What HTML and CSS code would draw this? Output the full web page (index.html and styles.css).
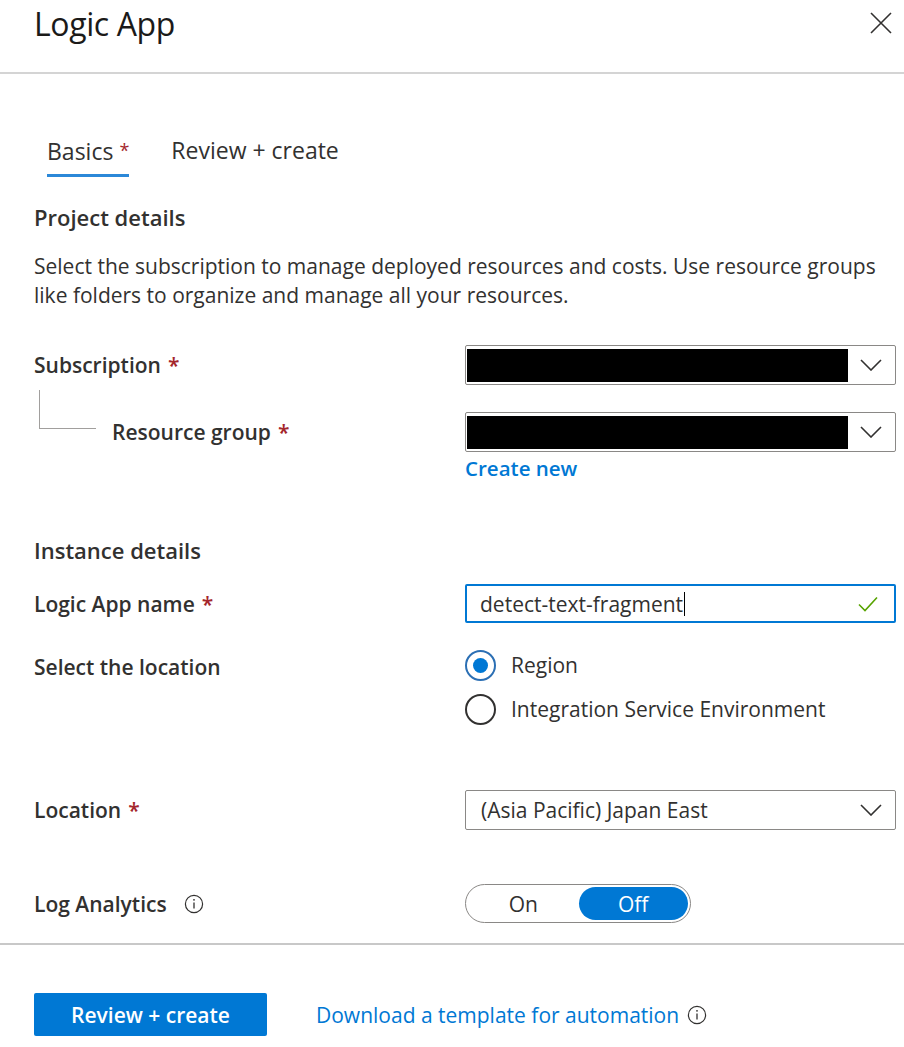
FILE: index.html
```html
<!DOCTYPE html>
<html lang="en">
<head>
<meta charset="utf-8">
<title>Logic App</title>
<link rel="stylesheet" href="styles.css">
</head>
<body>
<div class="panel">
  <header class="panel-header">
    <h1 class="panel-title">Logic App</h1>
    <button class="close-btn" aria-label="Close">
      <svg width="22" height="22" viewBox="0 0 22 22"><path d="M1 1 L21 21 M21 1 L1 21" stroke="#323130" stroke-width="1.6" fill="none"/></svg>
    </button>
  </header>

  <main class="panel-body">
    <nav class="tabs">
      <span class="tab tab-active">Basics<span class="req">*</span></span>
      <span class="tab">Review + create</span>
    </nav>

    <h2 class="section-title first">Project details</h2>
    <p class="desc">Select the subscription to manage deployed resources and costs. Use resource groups like folders to organize and manage all your resources.</p>

    <div class="row row-sub">
      <div class="label"><span>Subscription</span><span class="req">*</span></div>
      <div class="field">
        <div class="select">
          <div class="redact"></div>
          <svg class="chev" width="22" height="12" viewBox="0 0 22 12"><path d="M1 1 L11 11 L21 1" stroke="#323130" stroke-width="1.6" fill="none"/></svg>
        </div>
      </div>
    </div>

    <div class="row row-rg">
      <div class="label label-tree"><span class="tree"></span><span>Resource group</span><span class="req">*</span></div>
      <div class="field">
        <div class="select">
          <div class="redact"></div>
          <svg class="chev" width="22" height="12" viewBox="0 0 22 12"><path d="M1 1 L11 11 L21 1" stroke="#323130" stroke-width="1.6" fill="none"/></svg>
        </div>
      </div>
    </div>
    <div class="row row-link">
      <div></div>
      <div class="field"><a class="create-new">Create new</a></div>
    </div>

    <h2 class="section-title second">Instance details</h2>

    <div class="row row-name">
      <div class="label"><span>Logic App name</span><span class="req">*</span></div>
      <div class="field">
        <div class="textbox">
          <span class="value">detect-text-fragment</span><span class="caret"></span>
          <svg class="check" width="20" height="16" viewBox="0 0 20 16"><path d="M1 8.5 L7 14.5 L19 1.5" stroke="#57a300" stroke-width="1.6" fill="none"/></svg>
        </div>
      </div>
    </div>

    <div class="row row-loc-type">
      <div class="label label-top">Select the location</div>
      <div class="field">
        <div class="radio-item"><span class="radio checked"></span><span>Region</span></div>
        <div class="radio-item"><span class="radio"></span><span>Integration Service Environment</span></div>
      </div>
    </div>

    <div class="row row-location">
      <div class="label"><span>Location</span><span class="req">*</span></div>
      <div class="field">
        <div class="select">
          <span class="value">(Asia Pacific) Japan East</span>
          <svg class="chev" width="22" height="12" viewBox="0 0 22 12"><path d="M1 1 L11 11 L21 1" stroke="#323130" stroke-width="1.6" fill="none"/></svg>
        </div>
      </div>
    </div>

    <div class="row row-log">
      <div class="label"><span>Log Analytics</span>
        <svg class="info" width="20" height="20" viewBox="0 0 20 20"><circle cx="10" cy="10" r="8.6" stroke="#323130" stroke-width="1.2" fill="none"/><path d="M10 8.5 V14.5" stroke="#323130" stroke-width="1.3"/><circle cx="10" cy="5.8" r="0.9" fill="#323130"/></svg>
      </div>
      <div class="field">
        <div class="toggle">
          <span class="seg">On</span>
          <span class="seg seg-on">Off</span>
        </div>
      </div>
    </div>
  </main>

  <footer class="panel-footer">
    <button class="primary-btn">Review + create</button>
    <a class="template-link">Download a template for automation</a>
    <svg class="info" width="20" height="20" viewBox="0 0 20 20"><circle cx="10" cy="10" r="8.6" stroke="#323130" stroke-width="1.2" fill="none"/><path d="M10 8.5 V14.5" stroke="#323130" stroke-width="1.3"/><circle cx="10" cy="5.8" r="0.9" fill="#323130"/></svg>
  </footer>
</div>
</body>
</html>
```

FILE: styles.css
```css
* { box-sizing: border-box; }
html, body { margin: 0; padding: 0; background: #fff; }
body {
  font-family: "Open Sans", "Noto Sans", sans-serif;
  color: #323130;
  font-size: 21px;
}
.panel { width: 904px; }

.panel-header {
  height: 74px;
  border-bottom: 2px solid #d4d4d4;
  display: flex;
  justify-content: space-between;
  align-items: flex-start;
  padding: 0 12px 0 34px;
}
.panel-title {
  margin: 0;
  font-size: 32px;
  font-weight: 400;
  line-height: 48px;
  color: #1b1a19;
  letter-spacing: -0.4px;
}
.close-btn {
  border: 0;
  background: none;
  padding: 0;
  margin-top: 12px;
  width: 22px;
  height: 22px;
  line-height: 0;
}

.panel-body { padding: 0 8px 0 34px; }

.tabs {
  display: flex;
  gap: 42px;
  margin-top: 62px;
  padding-left: 13px;
}
.tab {
  line-height: 28px;
  padding-bottom: 9px;
  border-bottom: 3px solid transparent;
  font-size: 23px;
}
.tab-active { border-bottom-color: #2b88d8; }
.req { color: #a4262c; margin-left: 7px; }
.tab .req { margin-left: 6px; font-size: 18px; vertical-align: 3px; }

.section-title {
  margin: 0;
  font-size: 22px;
  font-weight: 600;
  line-height: 28px;
}
.section-title.first { margin-top: 26px; }
.section-title.second { margin-top: 54px; }

.desc {
  margin: 21px 0 0;
  line-height: 29px;
  font-size: 21px;
}

.row {
  display: grid;
  grid-template-columns: 431px 431px;
  align-items: center;
}
.label {
  font-weight: 600;
  font-size: 21px;
  display: flex;
  align-items: center;
}
.row-sub { margin-top: 35px; }
.row-rg { margin-top: 27px; }
.row-link { margin-top: 2px; }
.row-name { margin-top: 20px; }
.row-loc-type { margin-top: 20px; align-items: start; }
.row-location { margin-top: 59px; }
.row-log { margin-top: 54px; }

.label-tree { align-self: stretch; }
.tree {
  display: block;
  width: 57px;
  height: 39px;
  margin-left: 5px;
  margin-top: -22px;
  margin-right: 16px;
  border-left: 1px solid #a19f9d;
  border-bottom: 1px solid #a19f9d;
  align-self: flex-start;
}

.select {
  height: 40px;
  border: 1px solid #8a8886;
  border-radius: 2px;
  display: flex;
  align-items: center;
  padding: 0 13px 0 1px;
}
.redact {
  width: 381px;
  height: 33px;
  background: #000;
}
.select .value { padding-left: 14px; flex: 1; font-size: 21px; }
.chev { margin-left: auto; }

.create-new {
  display: block;
  color: #0078d4;
  font-weight: 600;
  font-size: 20.5px;
  line-height: 28px;
}

.textbox {
  height: 39px;
  border: 2px solid #0078d4;
  border-radius: 2px;
  display: flex;
  align-items: center;
  padding: 0 16px 0 13px;
}
.textbox .value { font-size: 21px; }
.caret {
  display: inline-block;
  width: 1px;
  height: 24px;
  background: #000;
  margin-left: 1px;
}
.check { margin-left: auto; }

.label-top { padding-top: 10px; }
.radio-item {
  display: flex;
  align-items: center;
  height: 44px;
  font-size: 21px;
}
.radio {
  width: 31px;
  height: 31px;
  border-radius: 50%;
  border: 2px solid #323130;
  margin-right: 15px;
  flex: none;
  display: flex;
  align-items: center;
  justify-content: center;
}
.radio.checked { border-color: #2b6fb4; }
.radio.checked::after {
  content: "";
  width: 15px;
  height: 15px;
  border-radius: 50%;
  background: #0078d4;
}

.label .info { margin-left: 17px; }

.toggle {
  width: 226px;
  height: 39px;
  border: 1px solid #8a8886;
  border-radius: 20px;
  display: flex;
  align-items: center;
  padding: 2px;
}
.seg {
  height: 33px;
  display: flex;
  align-items: center;
  justify-content: center;
  font-size: 21px;
  border-radius: 17px;
}
.seg:first-child { width: 111px; }
.seg-on {
  width: 110px;
  background: #0078d4;
  color: #fff;
}

.panel-footer {
  margin-top: 20px;
  border-top: 2px solid #c8c8c8;
  padding: 48px 0 0 34px;
  display: flex;
  align-items: center;
}
.primary-btn {
  width: 233px;
  height: 43px;
  background: #0078d4;
  border: 0;
  border-radius: 2px;
  color: #fff;
  font-family: inherit;
  font-size: 21px;
  font-weight: 600;
}
.template-link {
  margin-left: 49px;
  color: #0078d4;
  font-size: 21px;
}
.panel-footer .info { margin-left: 8px; }
```
